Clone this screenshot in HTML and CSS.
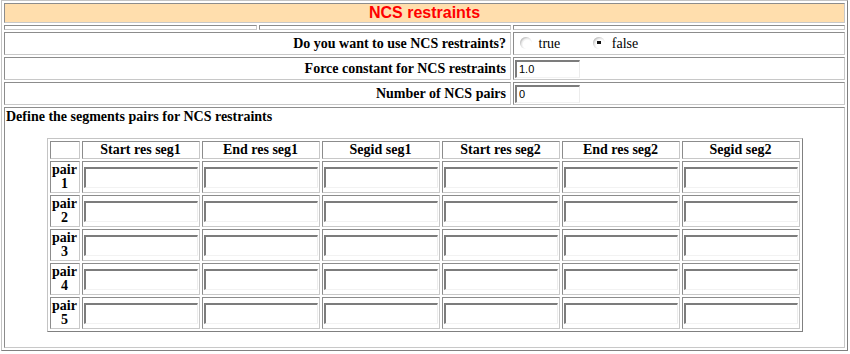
FILE: index.html
```html
<!DOCTYPE html>
<html lang="en">
<head>
  <meta charset="UTF-8" />
  <title>NCS restraints</title>
  <link rel="stylesheet" href="styles.css">
</head>
<body>
  <table class="form">
    <colgroup>
      <col class="c1">
      <col class="c2">
      <col class="c3">
    </colgroup>
    <tr>
      <th colspan="3" class="title">NCS restraints</th>
    </tr>
    <tr class="gap">
      <td></td><td></td><td></td>
    </tr>
    <tr class="row">
      <td colspan="2" class="label">Do you want to use NCS restraints?</td>
      <td>
        <label class="opt"><input type="radio" name="ncs" value="true"> true</label><label class="opt second"><input type="radio" name="ncs" value="false" checked> false</label>
      </td>
    </tr>
    <tr class="row">
      <td colspan="2" class="label">Force constant for NCS restraints</td>
      <td><input type="text" class="num" value="1.0"></td>
    </tr>
    <tr class="row">
      <td colspan="2" class="label">Number of NCS pairs</td>
      <td><input type="text" class="num" value="0"></td>
    </tr>
    <tr>
      <td colspan="3" class="section">
        <div class="section-title">Define the segments pairs for NCS restraints</div>
        <table class="pairs">
          <tr>
            <th class="pair"></th>
            <th>Start res seg1</th>
            <th>End res seg1</th>
            <th>Segid seg1</th>
            <th>Start res seg2</th>
            <th>End res seg2</th>
            <th>Segid seg2</th>
          </tr>
          <tr>
            <th class="pair">pair<br>1</th>
            <td><input type="text"></td><td><input type="text"></td><td><input type="text"></td>
            <td><input type="text"></td><td><input type="text"></td><td><input type="text"></td>
          </tr>
          <tr>
            <th class="pair">pair<br>2</th>
            <td><input type="text"></td><td><input type="text"></td><td><input type="text"></td>
            <td><input type="text"></td><td><input type="text"></td><td><input type="text"></td>
          </tr>
          <tr>
            <th class="pair">pair<br>3</th>
            <td><input type="text"></td><td><input type="text"></td><td><input type="text"></td>
            <td><input type="text"></td><td><input type="text"></td><td><input type="text"></td>
          </tr>
          <tr>
            <th class="pair">pair<br>4</th>
            <td><input type="text"></td><td><input type="text"></td><td><input type="text"></td>
            <td><input type="text"></td><td><input type="text"></td><td><input type="text"></td>
          </tr>
          <tr>
            <th class="pair">pair<br>5</th>
            <td><input type="text"></td><td><input type="text"></td><td><input type="text"></td>
            <td><input type="text"></td><td><input type="text"></td><td><input type="text"></td>
          </tr>
        </table>
      </td>
    </tr>
  </table>
</body>
</html>
```

FILE: styles.css
```css
body {
  margin: 0;
  background: #fff;
  color: #000;
  font-family: "Liberation Serif", "Times New Roman", serif;
  font-size: 14px;
}
table {
  border-collapse: separate;
  border-spacing: 2px;
  border: 1px solid;
  border-color: #c4c4c4 #808080 #808080 #c4c4c4;
}
td, th {
  border: 1px solid;
  border-color: #8c8c8c #c8c8c8 #c8c8c8 #8c8c8c;
  padding: 1px;
}
.form {
  width: 847px;
  margin-left: 1px;
  table-layout: fixed;
}
.c1 { width: 253px; }
.c2 { width: 252px; }
.c3 { width: 332px; }
.title {
  background: #ffdead;
  color: #ff0000;
  font: bold 16px "Liberation Sans", Arial, sans-serif;
  line-height: 16px;
}
.gap td {
  padding: 0;
  height: 3px;
}
.row td {
  height: 19px;
}
.label {
  text-align: right;
  font-weight: bold;
  padding-right: 4px;
}
.opt input {
  appearance: none;
  -webkit-appearance: none;
  width: 12px;
  height: 12px;
  margin: 0 3px 0 5px;
  border: none;
  border-radius: 50%;
  background: radial-gradient(circle at 62% 62%, #fff 40%, #ececec 55%, #a8a8a8 80%, #8a8a8a 100%);
  vertical-align: -1px;
}
.opt input:checked {
  background:
    linear-gradient(#111, #111) 4px 4px / 4px 3px no-repeat,
    radial-gradient(circle at 62% 62%, #fff 40%, #ececec 55%, #a8a8a8 80%, #8a8a8a 100%);
}
.second {
  margin-left: 28px;
}
input[type="text"] {
  box-sizing: border-box;
  margin: 0;
  padding: 0 2px;
  border-style: solid;
  border-width: 2px 1px 1px 2px;
  border-color: #7c7c7c #ececec #f2f2f2 #7c7c7c;
  background: #fff;
  font: 11px "Liberation Sans", Arial, sans-serif;
  vertical-align: middle;
}
.num {
  width: 65px;
  height: 18px;
}
.section {
  padding: 1px 1px 0;
}
.section-title {
  font-weight: bold;
}
.pairs {
  margin: 13px auto 15px;
}
.pairs th {
  font-weight: bold;
  line-height: 14px;
  text-align: center;
}
.pairs .pair {
  width: 26px;
}
.pairs td input {
  width: 114px;
  height: 21px;
}
```
